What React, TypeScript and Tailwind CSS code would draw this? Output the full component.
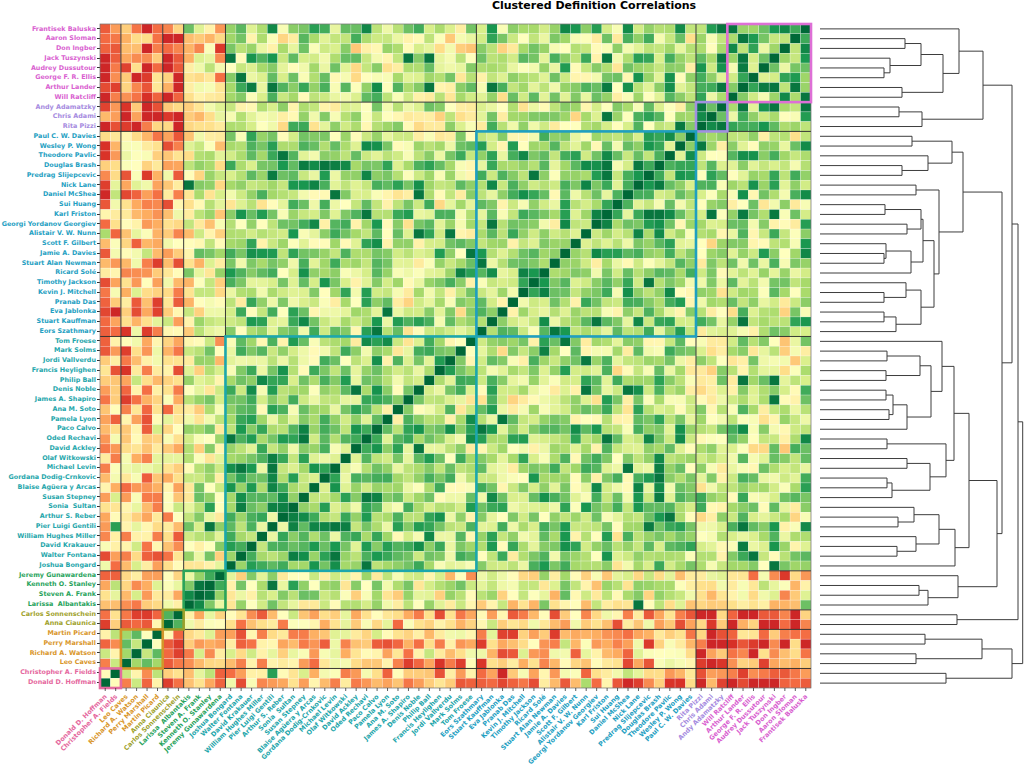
import React from 'react';

type Node = number | { x: number; c: [Node, Node] };
const n = (x: number, a: Node, b: Node): Node => ({ x, c: [a, b] });

const ROWS = 68;
const HM_W = 711;
const HM_H = 664;
const CW = HM_W / ROWS;
const RH = HM_H / ROWS;
const DENDRO_X0 = 811;

const groups = [
  {
    text: 'text-[#d95fd0]',
    box: '#de6fd6',
    names: ['Frantisek Baluska', 'Aaron Sloman', 'Don Ingber', 'Jack Tuszynski', 'Audrey Dussutour', 'George F. R. Ellis', 'Arthur Lander', 'Will Ratcliff'],
  },
  { text: 'text-[#a68be0]', box: '#a190e0', names: ['Andy Adamatzky', 'Chris Adami', 'Rita Pizzi'] },
  {
    text: 'text-[#24a0c2]',
    box: '#1f9fc0',
    names: [
      'Paul C. W. Davies', 'Wesley P. Wong', 'Theodore Pavlic', 'Douglas Brash', 'Predrag Slijepcevic', 'Nick Lane',
      'Daniel McShea', 'Sui Huang', 'Karl Friston', 'Georgi Yordanov Georgiev', 'Alistair V. W. Nunn', 'Scott F. Gilbert',
      'Jamie A. Davies', 'Stuart Alan Newman', 'Ricard Solé', 'Timothy Jackson', 'Kevin J. Mitchell', 'Pranab Das',
      'Eva Jablonka', 'Stuart Kauffman', 'Eors Szathmary',
    ],
  },
  {
    text: 'text-[#1ea6ab]',
    box: '#1ca7ad',
    names: [
      'Tom Froese', 'Mark Solms', 'Jordi Vallverdu', 'Francis Heylighen', 'Philip Ball', 'Denis Noble', 'James A. Shapiro',
      'Ana M. Soto', 'Pamela Lyon', 'Paco Calvo', 'Oded Rechavi', 'David Ackley', 'Olaf Witkowski', 'Michael Levin',
      'Gordana Dodig-Crnkovic', 'Blaise Agüera y Arcas', 'Susan Stepney', 'Sonia  Sultan', 'Arthur S. Reber',
      'Pier Luigi Gentili', 'William Hughes Miller', 'David Krakauer', 'Walter Fontana', 'Joshua Bongard',
    ],
  },
  { text: 'text-[#28a35c]', box: '#2aa35a', names: ['Jeremy Gunawardena', 'Kenneth O. Stanley', 'Steven A. Frank', 'Larissa  Albantakis'] },
  { text: 'text-[#9fa22c]', box: '#9aa02a', names: ['Carlos Sonnenschein', 'Anna Ciaunica'] },
  { text: 'text-[#d9962a]', box: '#d4942a', names: ['Martin Picard', 'Perry Marshall', 'Richard A. Watson', 'Leo Caves'] },
  { text: 'text-[#e5689e]', box: '#e46aa0', names: ['Christopher A. Fields', 'Donald D. Hoffman'] },
];

const fills = ['#d95fd0', '#a68be0', '#24a0c2', '#1ea6ab', '#28a35c', '#9fa22c', '#d9962a', '#e5689e'];

const items: { name: string; g: number }[] = [];
const bounds: { a: number; b: number }[] = [];
groups.forEach((gr, g) => {
  const a = items.length;
  gr.names.forEach((name) => items.push({ name, g }));
  bounds.push({ a, b: items.length - 1 });
});

const BASE = [
  [0.8, 0.74, 0.7, 0.64, 0.42, 0.18, 0.24, 0.16],
  [0.74, 0.86, 0.58, 0.56, 0.45, 0.18, 0.2, 0.18],
  [0.7, 0.58, 0.72, 0.68, 0.52, 0.36, 0.36, 0.34],
  [0.64, 0.56, 0.68, 0.72, 0.56, 0.4, 0.38, 0.4],
  [0.42, 0.45, 0.52, 0.56, 0.8, 0.4, 0.36, 0.42],
  [0.18, 0.18, 0.36, 0.4, 0.4, 0.66, 0.32, 0.34],
  [0.24, 0.2, 0.36, 0.38, 0.36, 0.32, 0.7, 0.46],
  [0.16, 0.18, 0.34, 0.4, 0.42, 0.34, 0.46, 0.62],
];

function mulberry(seed: number) {
  return () => {
    seed = (seed + 0x6d2b79f5) | 0;
    let t = Math.imul(seed ^ (seed >>> 15), 1 | seed);
    t = (t + Math.imul(t ^ (t >>> 7), 61 | t)) ^ t;
    return ((t ^ (t >>> 14)) >>> 0) / 4294967296;
  };
}

// symmetric correlation-ish matrix, 0..1 on the colour scale
const M: number[][] = (() => {
  const rnd = mulberry(20240611);
  const bias = items.map(() => (rnd() - 0.5) * 0.14);
  const m = items.map(() => new Array(ROWS).fill(0));
  for (let i = 0; i < ROWS; i++) {
    m[i][i] = 1;
    for (let j = i + 1; j < ROWS; j++) {
      const b = BASE[items[i].g][items[j].g];
      let v = b + bias[i] + bias[j] + (rnd() - 0.5) * 0.42;
      if (rnd() < 0.04) v += 0.25;
      v = Math.max(0.08, Math.min(0.97, v));
      m[i][j] = v;
      m[j][i] = v;
    }
  }
  return m;
})();

const STOPS = ['#a50026', '#d73027', '#f46d43', '#fdae61', '#fee08b', '#ffffbf', '#d9ef8b', '#a6d96a', '#66bd63', '#1a9850', '#006837'];
const hex = (h: string) => [1, 3, 5].map((k) => parseInt(h.slice(k, k + 2), 16));
function rdylgn(t: number) {
  const p = t * (STOPS.length - 1);
  const k = Math.min(STOPS.length - 2, Math.floor(p));
  const f = p - k;
  const a = hex(STOPS[k]);
  const b = hex(STOPS[k + 1]);
  const c = a.map((v, i) => Math.round(v + (b[i] - v) * f));
  return `rgb(${c[0]},${c[1]},${c[2]})`;
}

const TREE: Node = n(1022.7,
  n(1018,
    n(1012,
      n(983,
        n(959, 0, n(943, n(921, n(905, 1, 2), n(890, 3, n(884, 4, 5))), n(902, 6, 7))),
        n(922, n(899, 8, 9), 10)),
      n(1002,
        n(963,
          n(952, n(912, 11, 12), n(928, 13, n(902, 14, 15))),
          n(939, n(916, 16, 17),
            n(934,
              n(923, n(921, n(885, 18, 19), n(907, 20, 21)), n(911, n(886, 22, n(884, 23, 24)), 25)),
              n(921, n(906, 26, n(884, 27, 28)), n(896, n(884, 29, 30), 31))))),
        n(997,
          n(969,
            n(954,
              n(942, 32, n(931, n(920, n(887, 33, 34), n(886, 35, 36)), n(907, n(893, n(886, 37, 38), n(889, 39, 40)), 41))),
              n(946, n(887, 42, 43), n(930, n(907, 44, 45), n(892, n(887, 46, 47), 48)))),
            n(955, n(939, n(914, 49, n(898, 50, 51)), n(916, 52, n(897, 53, 54))), 55)),
          n(958, 56, n(928, n(919, 57, 58), 59))))),
    n(957, 60, 61)),
  n(1012, n(982, n(925, 62, 63), n(916, 64, 65)), n(946, 66, 67)));

const rowY = (r: number) => (r + 0.5) * RH;

function collectLinks(node: Node, out: string[]): { x: number; y: number } {
  if (typeof node === 'number') return { x: 820 - DENDRO_X0, y: rowY(node) };
  const a = collectLinks(node.c[0], out);
  const b = collectLinks(node.c[1], out);
  const x = node.x - DENDRO_X0;
  out.push(`M${a.x},${a.y}H${x}V${b.y}H${b.x}`);
  return { x, y: (a.y + b.y) / 2 };
}

const Dendrogram: React.FC = () => {
  const paths: string[] = [];
  collectLinks(TREE, paths);
  return (
    <svg width={213} height={HM_H} className="shrink-0">
      {paths.map((d, i) => (
        <path key={i} d={d} fill="none" stroke="#3d3d3d" strokeWidth={1} />
      ))}
    </svg>
  );
};

const Heatmap: React.FC = () => {
  const cells: React.ReactNode[] = [];
  for (let r = 0; r < ROWS; r++) {
    for (let c = 0; c < ROWS; c++) {
      cells.push(
        <rect
          key={`${r}-${c}`}
          x={c * CW}
          y={r * RH}
          width={CW}
          height={RH}
          fill={rdylgn(M[r][ROWS - 1 - c])}
          stroke="#ffffff"
          strokeOpacity={0.45}
          strokeWidth={0.5}
        />,
      );
    }
  }
  const cuts = bounds.slice(1).map((b) => b.a);
  return (
    <svg width={HM_W} height={HM_H} overflow="visible" className="shrink-0 overflow-visible">
      {cells}
      {cuts.map((a) => (
        <line key={`h${a}`} x1={0} x2={HM_W} y1={a * RH} y2={a * RH} stroke="#222" strokeWidth={0.9} />
      ))}
      {cuts.map((a) => (
        <line key={`v${a}`} x1={(ROWS - a) * CW} x2={(ROWS - a) * CW} y1={0} y2={HM_H} stroke="#222" strokeWidth={0.9} />
      ))}
      <rect x={0} y={0} width={HM_W} height={HM_H} fill="none" stroke="#555" strokeWidth={0.6} />
      {bounds.map((b, g) => (
        <rect
          key={`box${g}`}
          x={(ROWS - 1 - b.b) * CW}
          y={b.a * RH}
          width={(b.b - b.a + 1) * CW}
          height={(b.b - b.a + 1) * RH}
          fill="none"
          stroke={groups[g].box}
          strokeWidth={2.6}
        />
      ))}
      {items.map((_, c) => {
        const it = items[ROWS - 1 - c];
        const cx = (c + 0.5) * CW;
        const ax = cx + 2;
        const ay = HM_H + 9;
        return (
          <g key={`lab${c}`}>
            <line x1={cx} x2={cx} y1={HM_H} y2={HM_H + 3} stroke="#333" strokeWidth={0.8} />
            <text
              x={ax}
              y={ay}
              transform={`rotate(-45 ${ax} ${ay})`}
              textAnchor="end"
              fontSize={6.5}
              fontWeight={700}
              fill={fills[it.g]}
              xmlSpace="preserve"
            >
              {it.name}
            </text>
          </g>
        );
      })}
    </svg>
  );
};

const App: React.FC = () => {
  return (
    <div className="w-[1024px] h-[765px] bg-white overflow-hidden font-['DejaVu_Sans',sans-serif]">
      <div className="h-[24px] pl-[164px] text-center text-[11px] font-bold leading-[12px] text-black">
        Clustered Definition Correlations
      </div>
      <div className="flex">
        <div className="w-[100px] shrink-0 flex flex-col">
          {items.map((it, i) => (
            <div key={i} className="h-[9.765px] flex items-center justify-end">
              <span className={`text-[6.4px] font-bold leading-none whitespace-pre ${groups[it.g].text}`}>{it.name}</span>
              <span className="ml-[1px] w-[3px] h-px bg-[#333]" />
            </div>
          ))}
        </div>
        <Heatmap />
        <Dendrogram />
      </div>
    </div>
  );
};

export default App;
